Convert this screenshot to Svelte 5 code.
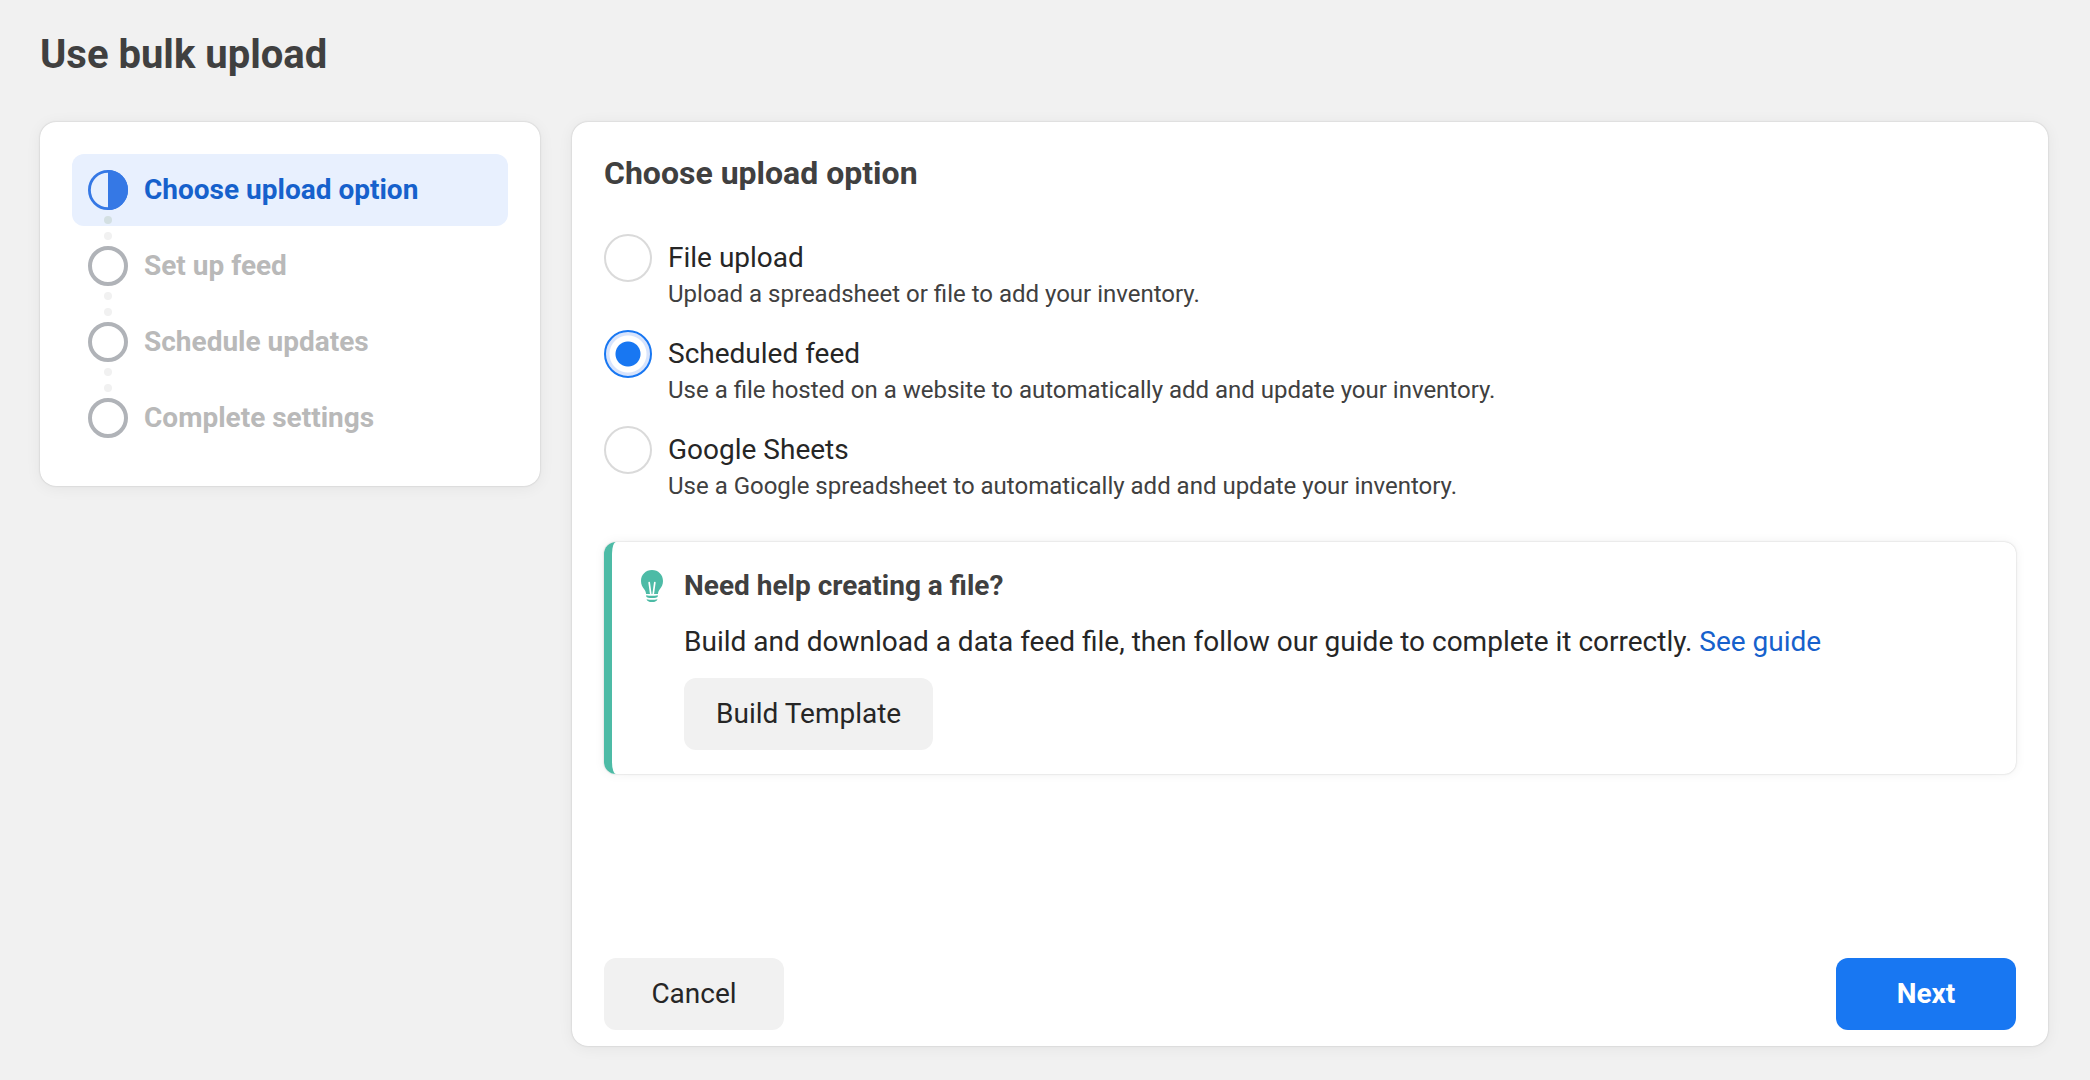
<script lang="ts">
    interface Step {
        label: string;
        current?: boolean;
    }

    interface UploadOption {
        value: string;
        label: string;
        description: string;
    }

    const steps: Step[] = [
        { label: 'Choose upload option', current: true },
        { label: 'Set up feed' },
        { label: 'Schedule updates' },
        { label: 'Complete settings' }
    ];

    const options: UploadOption[] = [
        {
            value: 'file',
            label: 'File upload',
            description: 'Upload a spreadsheet or file to add your inventory.'
        },
        {
            value: 'scheduled',
            label: 'Scheduled feed',
            description: 'Use a file hosted on a website to automatically add and update your inventory.'
        },
        {
            value: 'sheets',
            label: 'Google Sheets',
            description: 'Use a Google spreadsheet to automatically add and update your inventory.'
        }
    ];

    let selected = $state('scheduled');
</script>

<div class="page">
    <h1>Use bulk upload</h1>

    <div class="columns">
        <nav class="card sidebar" aria-label="Steps">
            <ol>
                {#each steps as step, i}
                    <li class="step" class:current={step.current} aria-current={step.current ? 'step' : undefined}>
                        <span class="marker">
                            <svg viewBox="0 0 40 40" width="40" height="40" aria-hidden="true">
                                {#if step.current}
                                    <circle cx="20" cy="20" r="18.6" fill="none" stroke="#3578e5" stroke-width="2.8" />
                                    <path d="M20 0a20 20 0 0 1 0 40z" fill="#3578e5" />
                                {:else}
                                    <circle cx="20" cy="20" r="18" fill="none" stroke="#b0b3b8" stroke-width="4" />
                                {/if}
                            </svg>
                            {#if i < steps.length - 1}
                                <span class="dots"><i></i><i></i></span>
                            {/if}
                        </span>
                        {step.label}
                    </li>
                {/each}
            </ol>
        </nav>

        <main class="card content">
            <h2>Choose upload option</h2>

            <div class="options" role="radiogroup" aria-label="Upload option">
                {#each options as option}
                    <div class="option">
                        <input
                            type="radio"
                            name="upload"
                            id={option.value}
                            value={option.value}
                            aria-describedby="{option.value}-description"
                            bind:group={selected}
                        />
                        <div>
                            <label for={option.value}>{option.label}</label>
                            <p id="{option.value}-description">{option.description}</p>
                        </div>
                    </div>
                {/each}
            </div>

            <section class="help">
                <svg class="bulb" viewBox="0 0 32 32" width="32" height="32" aria-hidden="true">
                    <path
                        d="M16 0C9.700 0 5 4.700 5 11c0 3.600 1.500 6 3.200 8.300 1 1.400 1.600 2.600 1.900 4.700h11.800c.3-2.100.9-3.300 1.900-4.700C25.500 17 27 14.600 27 11 27 4.700 22.300 0 16 0z"
                        fill="#4dbba6"
                    />
                    <path
                        d="M13.200 12.600l1.500 10.900M18.800 12.600l-1.500 10.900"
                        fill="none"
                        stroke="#fff"
                        stroke-width="1.700"
                        stroke-linecap="round"
                    />
                    <path
                        d="M10.200 25.200q5.800 1.300 11.600 0v1.400q-1 1.500-5.800 1.500t-5.800-1.500zM10.500 29.200q5.500 1.200 11 0-.8 2.800-5.500 2.800t-5.500-2.800z"
                        fill="#4dbba6"
                    />
                </svg>
                <div>
                    <h3>Need help creating a file?</h3>
                    <p>
                        Build and download a data feed file, then follow our guide to complete it correctly.
                        <a href="#guide">See guide</a>
                    </p>
                    <button type="button" class="template">Build Template</button>
                </div>
            </section>

            <div class="actions">
                <button type="button">Cancel</button>
                <button type="button" class="primary">Next</button>
            </div>
        </main>
    </div>
</div>

<style>
    :global(body) {
        margin: 0;
        background: #f1f1f1;
    }

    .page {
        display: flex;
        flex-direction: column;
        box-sizing: border-box;
        min-height: 100vh;
        padding: 32px 42px 34px 40px;
        font-family: Roboto, 'Liberation Sans', sans-serif;
        font-size: 28px;
        line-height: 40px;
        color: #262626;
    }

    h1,
    h2,
    h3,
    p,
    ol {
        margin: 0;
        padding: 0;
    }

    h1,
    h2,
    h3 {
        font-weight: 700;
        color: #404040;
    }

    h1 {
        font-size: 40px;
        line-height: 46px;
        margin-bottom: 44px;
    }

    h2 {
        font-size: 32px;
        line-height: 38px;
    }

    h3 {
        font-size: 28px;
        line-height: 40px;
    }

    .columns {
        display: flex;
        flex: 1;
        gap: 32px;
    }

    .card {
        box-sizing: border-box;
        background: #fff;
        border-radius: 16px;
        box-shadow:
            0 0 2px rgba(0, 0, 0, 0.2),
            0 2px 16px rgba(0, 0, 0, 0.06);
    }

    .sidebar {
        flex: 0 0 500px;
        align-self: flex-start;
        padding: 32px;
    }

    ol {
        display: flex;
        flex-direction: column;
        gap: 4px;
        list-style: none;
    }

    .step {
        display: flex;
        align-items: center;
        gap: 16px;
        height: 72px;
        padding: 0 16px;
        border-radius: 12px;
        font-weight: 700;
        color: #b9b9b9;
    }

    .step.current {
        background: #e8f0fe;
        color: #1661cc;
    }

    .marker {
        position: relative;
        width: 40px;
        height: 40px;
    }

    .marker svg {
        display: block;
    }

    /* connector hangs below the marker, into the next row */
    .dots {
        position: absolute;
        top: 46px;
        left: 16px;
        display: flex;
        flex-direction: column;
        gap: 8px;
    }

    .dots i {
        width: 8px;
        height: 8px;
        border-radius: 50%;
        background: #f1f1f1;
    }

    .current .dots i:first-child {
        background: #d3dfe2;
    }

    .content {
        display: flex;
        flex: 1;
        flex-direction: column;
        min-width: 0;
        padding: 32px 32px 16px;
    }

    .options {
        display: flex;
        flex-direction: column;
        gap: 20px;
        margin: 42px 0 40px;
    }

    .option {
        display: flex;
        gap: 16px;
    }

    input {
        flex: none;
        box-sizing: border-box;
        width: 48px;
        height: 48px;
        margin: 0;
        appearance: none;
        border: 2px solid #dadada;
        border-radius: 50%;
        background: #fff;
        cursor: pointer;
    }

    input:checked {
        border-color: #1877f2;
        background: radial-gradient(circle, #1877f2 12px, #fff 13px, #fff 18px, #d8e4fc 19px);
    }

    .option label {
        display: block;
        padding-top: 4px;
        cursor: pointer;
    }

    .option p {
        font-size: 24px;
        line-height: 32px;
        color: #404040;
    }

    .help {
        display: flex;
        gap: 16px;
        padding: 24px;
        border-left: 8px solid #4dbba6;
        border-radius: 12px;
        box-shadow:
            0 0 2px rgba(0, 0, 0, 0.2),
            0 0 12px rgba(0, 0, 0, 0.06);
    }

    .bulb {
        flex: none;
        margin-top: 4px;
    }

    .help p {
        margin: 16px 0;
    }

    a {
        color: #1661cc;
        text-decoration: none;
    }

    button {
        min-width: 180px;
        height: 72px;
        padding: 0 32px;
        border: 0;
        border-radius: 12px;
        background: #f1f1f1;
        font: inherit;
        color: #262626;
        cursor: pointer;
    }

    .template {
        display: block;
    }

    .primary {
        background: #1877f2;
        font-weight: 700;
        color: #fff;
    }

    .actions {
        display: flex;
        justify-content: space-between;
        margin-top: auto;
        padding-top: 32px;
    }
</style>
